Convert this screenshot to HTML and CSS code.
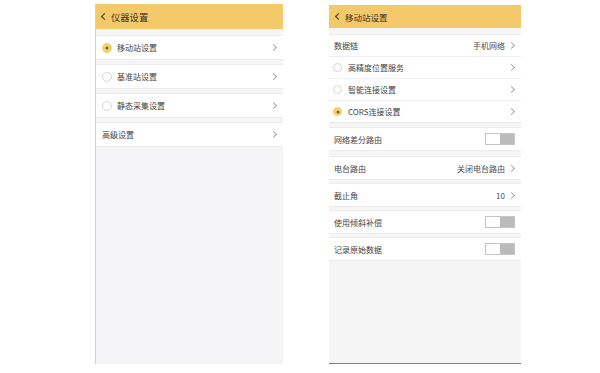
FILE: index.html
```html
<!DOCTYPE html>
<html>
<head>
    <meta charset="UTF-8">
    <title>仪器设置</title>
    <link rel="stylesheet" href="styles.css">
</head>
<body>
<div id="wrap">
    <!-- 左侧：仪器设置 -->
    <div class="phone left">
        <div class="head"><i class="back"></i>仪器设置</div>
        <ul class="group">
            <li class="row"><span class="radio on"></span><span class="label">移动站设置</span><i class="arrow"></i></li>
        </ul>
        <ul class="group">
            <li class="row"><span class="radio"></span><span class="label">基准站设置</span><i class="arrow"></i></li>
        </ul>
        <ul class="group">
            <li class="row"><span class="radio"></span><span class="label">静态采集设置</span><i class="arrow"></i></li>
        </ul>
        <ul class="group">
            <li class="row"><span class="label">高级设置</span><i class="arrow"></i></li>
        </ul>
    </div>

    <!-- 右侧：移动站设置 -->
    <div class="phone right">
        <div class="head"><i class="back"></i>移动站设置</div>
        <ul class="group first">
            <li class="row"><span class="label">数据链</span><span class="value">手机网络</span><i class="arrow"></i></li>
            <li class="row"><span class="radio"></span><span class="label">高精度位置服务</span><i class="arrow"></i></li>
            <li class="row"><span class="radio"></span><span class="label">智能连接设置</span><i class="arrow"></i></li>
            <li class="row"><span class="radio on"></span><span class="label">CORS连接设置</span><i class="arrow"></i></li>
        </ul>
        <ul class="group second">
            <li class="row"><span class="label">网络差分路由</span><span class="switch"></span></li>
        </ul>
        <ul class="group">
            <li class="row"><span class="label">电台路由</span><span class="value">关闭电台路由</span><i class="arrow"></i></li>
        </ul>
        <ul class="group">
            <li class="row"><span class="label">截止角</span><span class="value">10</span><i class="arrow"></i></li>
        </ul>
        <ul class="group">
            <li class="row"><span class="label">使用倾斜补偿</span><span class="switch"></span></li>
        </ul>
        <ul class="group">
            <li class="row"><span class="label">记录原始数据</span><span class="switch"></span></li>
        </ul>
    </div>
</div>
</body>
</html>
```
FILE: styles.css
```css
html,body{
    margin: 0;
    background: #fff;
}
ul,li{
    margin: 0;
    padding: 0;
    list-style: none;
}
#wrap{
    display: flex;
    align-items: flex-end;
    gap: 46px;
    padding-left: 95px;
    height: 364px;
    font-family: "Noto Sans CJK SC", "Liberation Sans", sans-serif;
}
.phone{
    background: #f5f5f7;
    box-sizing: border-box;
    display: flex;
    flex-direction: column;
}
.left{
    width: 188px;
    height: 360px;
    border-left: 1px solid #c6dab4;
}
.right{
    width: 192px;
    height: 359px;
    border-bottom: 1px solid #7f7f7f;
    background: #f5f5f5;
}
.head{
    background: #f4c96a;
    color: #3a3326;
    display: flex;
    align-items: center;
    gap: 3px;
    padding-left: 4px;
    margin-bottom: 6px;
}
.left .head{
    height: 25px;
    font-size: 9.3px;
}
.right .head{
    height: 23px;
    font-size: 8.5px;
    padding-left: 5px;
}
.back{
    width: 4px;
    height: 4px;
    border-left: 1.6px solid #3a3326;
    border-bottom: 1.6px solid #3a3326;
    transform: rotate(45deg);
    margin: 0 1px 0 2px;
}
.group{
    background: #fff;
    border-top: 1px solid #ececee;
    border-bottom: 1px solid #ececee;
    margin-bottom: 3px;
}
.left .group{
    margin-bottom: 4px;
}
.right .first{
    margin-bottom: 4px;
}
.right .second{
    margin-bottom: 5px;
}
.row{
    display: flex;
    align-items: center;
    font-size: 8px;
    color: #444;
    padding: 0 6px;
}
.left .row{
    height: 23px;
}
.right .row{
    height: 22px;
    padding: 0 6px 0 5px;
}
.right .first .row{
    height: 21px;
}
.first .row + .row{
    border-top: 1px solid #efefef;
}
.label{
    flex: 1;
}
.value{
    color: #4a4a4a;
    margin-right: 4px;
}
.radio{
    flex: none;
    width: 9px;
    height: 9px;
    border: 1px solid #d6d6d6;
    border-radius: 50%;
    box-sizing: border-box;
    margin: 0 6px 0 -1px;
    background: #fff;
    position: relative;
}
.left .radio{
    margin: 0 5px 0 0;
    width: 10px;
    height: 10px;
}
.radio.on{
    background: #f3d46c;
    border-color: #efcd62;
}
.radio.on:after{
    content: "";
    position: absolute;
    width: 3px;
    height: 3px;
    border-radius: 50%;
    background: #6f6244;
    left: 50%;
    top: 50%;
    transform: translate(-50%,-50%);
}
.arrow{
    width: 4px;
    height: 4px;
    border-top: 1px solid #a8a8a8;
    border-right: 1px solid #a8a8a8;
    transform: rotate(45deg);
    margin-right: 1px;
}
.switch{
    width: 30px;
    height: 12px;
    box-sizing: border-box;
    border: 1px solid #c4c4c4;
    background: linear-gradient(to right, #fff 50%, #bbb 50%);
}
```
